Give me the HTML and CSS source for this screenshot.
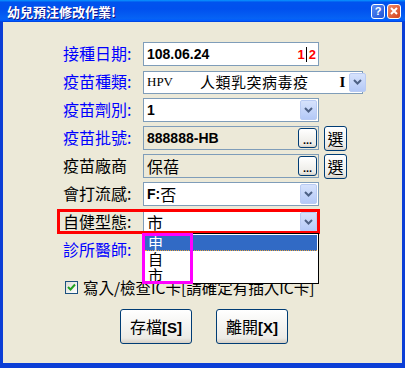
FILE: index.html
```html
<!DOCTYPE html>
<html lang="zh-Hant">
<head>
    <meta charset="UTF-8">
    <title>幼兒預注修改作業!</title>
    <link rel="stylesheet" href="styles.css">
</head>
<body>
    <div class="window">
        <div class="titlebar">
            <span class="title">幼兒預注修改作業!</span>
            <div class="caption">
                <span class="cap help">?</span>
                <span class="cap close">
                    <svg width="8" height="8" viewBox="0 0 8 8"><path d="M1 1 L7 7 M7 1 L1 7" stroke="#fff" stroke-width="2" fill="none"/></svg>
                </span>
            </div>
        </div>
        <div class="frame">
            <div class="form">
                <div class="row">
                    <span class="label blue">接種日期:</span>
                    <div class="field">
                        <span class="num">108.06.24</span>
                        <span class="spin"><b>1</b><i></i><b>2</b></span>
                    </div>
                </div>
                <div class="row">
                    <span class="label blue">疫苗種類:</span>
                    <div class="field wide">
                        <span class="serif">HPV</span>
                        <span class="vname">人類乳突病毒疫</span>
                        <span class="cut">I</span>
                        <span class="drop"><svg width="9" height="6" viewBox="0 0 9 6"><path d="M1 1 L4.5 4.5 L8 1" stroke="#4d6185" stroke-width="2" fill="none"/></svg></span>
                    </div>
                </div>
                <div class="row">
                    <span class="label blue">疫苗劑別:</span>
                    <div class="field">
                        <span class="num">1</span>
                        <span class="drop"><svg width="9" height="6" viewBox="0 0 9 6"><path d="M1 1 L4.5 4.5 L8 1" stroke="#4d6185" stroke-width="2" fill="none"/></svg></span>
                    </div>
                </div>
                <div class="row">
                    <span class="label blue">疫苗批號:</span>
                    <div class="field readonly">
                        <span class="num">888888-HB</span>
                        <span class="dots">...</span>
                    </div>
                    <span class="pick">選</span>
                </div>
                <div class="row">
                    <span class="label">疫苗廠商</span>
                    <div class="field readonly">
                        <span>保蓓</span>
                        <span class="dots">...</span>
                    </div>
                    <span class="pick">選</span>
                </div>
                <div class="row">
                    <span class="label">會打流感:</span>
                    <div class="field">
                        <span class="num">F:</span><span>否</span>
                        <span class="drop"><svg width="9" height="6" viewBox="0 0 9 6"><path d="M1 1 L4.5 4.5 L8 1" stroke="#4d6185" stroke-width="2" fill="none"/></svg></span>
                    </div>
                </div>
                <div class="row marked">
                    <span class="label">自健型態:</span>
                    <div class="field">
                        <span>市</span>
                        <span class="drop"><svg width="9" height="6" viewBox="0 0 9 6"><path d="M1 1 L4.5 4.5 L8 1" stroke="#4d6185" stroke-width="2" fill="none"/></svg></span>
                        <div class="list">
                            <div class="item selected">申</div>
                            <div class="item">自</div>
                            <div class="item">市</div>
                        </div>
                    </div>
                </div>
                <div class="row last">
                    <span class="label blue">診所醫師:</span>
                    <div class="field">
                        <span class="drop"><svg width="9" height="6" viewBox="0 0 9 6"><path d="M1 1 L4.5 4.5 L8 1" stroke="#4d6185" stroke-width="2" fill="none"/></svg></span>
                    </div>
                </div>
            </div>
            <div class="check">
                <span class="box">
                    <svg width="9" height="9" viewBox="0 0 9 9"><path d="M1 4 L3.5 6.5 L8 1.5" stroke="#21a121" stroke-width="2" fill="none"/></svg>
                </span>
                <span>寫入/檢查IC卡[請確定有插入IC卡]</span>
            </div>
            <div class="actions">
                <button class="xpbtn">存檔<b>[S]</b></button>
                <button class="xpbtn">離開<b>[X]</b></button>
            </div>
        </div>
    </div>
</body>
</html>
```

FILE: styles.css
```css
body {
    margin: 0;
    font-family: "Noto Sans CJK TC", sans-serif;
}
.window {
    width: 405px;
    height: 368px;
    display: flex;
    flex-direction: column;
}
.titlebar {
    height: 22px;
    display: flex;
    align-items: center;
    justify-content: space-between;
    padding: 0 4px 0 7px;
    background: linear-gradient(to bottom, #0997ff 0, #0053ee 10%, #0050ee 40%, #0663f5 85%, #005bff 93%, #003dd7 100%);
}
.title {
    color: #fff;
    font-weight: bold;
    font-size: 13px;
    line-height: 13px;
    text-shadow: 1px 1px #0f1089;
}
.caption {
    display: flex;
    gap: 2px;
}
.cap {
    width: 14px;
    height: 15px;
    box-sizing: border-box;
    border: 1px solid #fff;
    border-radius: 3px;
    display: flex;
    align-items: center;
    justify-content: center;
    color: #fff;
    font: bold 11px "Liberation Sans", sans-serif;
}
.help {
    background: linear-gradient(135deg, #5a8cf5, #1e52d6);
}
.close {
    background: linear-gradient(135deg, #ee8a66, #d3411c);
}
.frame {
    flex: 1;
    background: #ece9d8;
    border: solid #0b3ed6;
    border-width: 0 3px 5px 3px;
    padding-top: 20px;
}
.form {
    padding-left: 60px;
}
.row {
    display: flex;
    align-items: center;
    height: 24px;
    margin-bottom: 4px;
    position: relative;
}
.row.last {
    margin-bottom: 0;
}
.label {
    width: 80px;
    font-size: 16px;
    line-height: 16px;
    padding-bottom: 3px;
}
.blue {
    color: #0000ff;
}
.field {
    width: 176px;
    height: 24px;
    box-sizing: border-box;
    border: 1px solid #7f9db9;
    background: #fff;
    display: flex;
    align-items: center;
    padding-left: 3px;
    font-size: 16px;
    line-height: 16px;
    white-space: nowrap;
    position: relative;
}
.field span {
    flex-shrink: 0;
}
.field.wide {
    width: 220px;
    height: 23px;
}
.field.readonly {
    background: #ece9d8;
}
.num {
    font: bold 14px "Liberation Sans", sans-serif;
}
.spin {
    margin-left: auto;
    margin-right: 2px;
    display: flex;
    align-items: center;
}
.spin b {
    color: #ff0000;
    font: bold 13px "Liberation Sans", sans-serif;
}
.spin i {
    width: 1px;
    height: 15px;
    background: #000;
    margin: 0 2px 0 1px;
}
.serif {
    font: 13px "Liberation Serif", serif;
}
.vname {
    margin-left: 27px;
    font-size: 15px;
    letter-spacing: 0.5px;
}
.cut {
    margin-left: 31px;
    font: bold 15px "Liberation Serif", serif;
}
.drop {
    margin-left: auto;
    margin-right: 1px;
    width: 17px;
    height: calc(100% - 2px);
    box-sizing: border-box;
    border: 1px solid #b9cbf3;
    border-radius: 2px;
    background: linear-gradient(to bottom, #d6e2fc, #b4c9f7);
    display: flex;
    align-items: center;
    justify-content: center;
}
.cut + .drop {
    margin-left: 4px;
}
.dots {
    position: absolute;
    right: 1px;
    top: 1px;
    width: 19px;
    height: 20px;
    box-sizing: border-box;
    border: 1px solid #003c74;
    border-radius: 3px;
    background: linear-gradient(to bottom, #fff, #ecebe6 85%, #d6d0c5);
    display: flex;
    align-items: flex-end;
    justify-content: center;
    font: bold 11px "Liberation Sans", sans-serif;
    line-height: 13px;
}
.pick {
    margin-left: 5px;
    width: 23px;
    height: 25px;
    box-sizing: border-box;
    border: 1px solid #003c74;
    border-radius: 3px;
    background: linear-gradient(to bottom, #fff, #ecebe6 85%, #d6d0c5);
    display: flex;
    align-items: center;
    justify-content: center;
    font-size: 16px;
    line-height: 16px;
}
.marked::after {
    content: "";
    position: absolute;
    left: -6px;
    top: -1px;
    width: 263px;
    height: 25px;
    box-sizing: border-box;
    border: 3px solid #ff0000;
    z-index: 2;
}
.list {
    position: absolute;
    left: -1px;
    top: 22px;
    width: 176px;
    height: 51px;
    box-sizing: border-box;
    border: 1px solid #000;
    background: #fff;
    padding-top: 1px;
    z-index: 3;
}
.list::after {
    content: "";
    position: absolute;
    left: -2px;
    top: -1px;
    width: 51px;
    height: 51px;
    box-sizing: border-box;
    border: 3px solid #ff00ff;
}
.item {
    height: 16px;
    font-size: 15px;
    line-height: 16px;
    padding-left: 3px;
    margin: 0 1px;
}
.item.selected {
    background: #316ac5;
    color: #fff;
    box-sizing: border-box;
    border-bottom: 1px dotted #e8a33c;
}
.check {
    display: flex;
    align-items: center;
    gap: 5px;
    height: 16px;
    margin: 17px 0 0 62px;
    font-size: 15.5px;
    line-height: 16px;
}
.box {
    width: 13px;
    height: 13px;
    box-sizing: border-box;
    border: 1px solid #1c5180;
    background: linear-gradient(135deg, #dcdcd7, #fff);
    display: flex;
    align-items: center;
    justify-content: center;
}
.actions {
    display: flex;
    gap: 24px;
    margin: 14px 0 0 117px;
}
.xpbtn {
    width: 72px;
    height: 35px;
    padding: 0;
    border: 1px solid #003c74;
    border-radius: 3px;
    background: linear-gradient(to bottom, #fff, #ecebe6 85%, #d6d0c5);
    font-family: "Noto Sans CJK TC", sans-serif;
    font-size: 16px;
    line-height: 16px;
    color: #000;
}
.xpbtn b {
    font: bold 15px "Liberation Sans", sans-serif;
}
```
